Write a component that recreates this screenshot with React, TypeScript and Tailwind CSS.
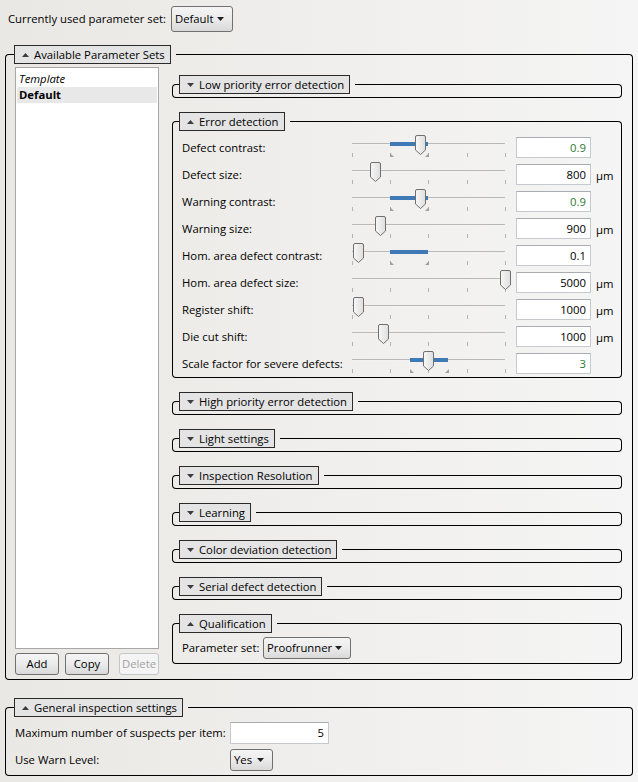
import React from "react";

const TriUp = () => (
  <svg width="7" height="4" viewBox="0 0 7 4" className="shrink-0">
    <polygon points="0,4 3.5,0 7,4" fill="#3c3c3c" />
  </svg>
);
const TriDown = () => (
  <svg width="7" height="4" viewBox="0 0 7 4" className="shrink-0">
    <polygon points="0,0 7,0 3.5,4" fill="#3c3c3c" />
  </svg>
);
const ComboArrow = () => (
  <svg width="7" height="4" viewBox="0 0 7 4" className="shrink-0">
    <polygon points="0,0 7,0 3.5,4" fill="#202020" />
  </svg>
);

function GroupBox({
  title,
  open,
  cornerClass,
  bodyClass,
  children,
}: {
  title: string;
  open: boolean;
  cornerClass: string;
  bodyClass: string;
  children?: React.ReactNode;
}) {
  return (
    <div className="flex flex-col">
      <div className="flex items-start h-[19px]">
        <div className={"h-[10px] mt-[9px] border-l border-t border-black rounded-tl-[4px] shrink-0 " + cornerClass} />
        <div className="h-[19px] flex items-center border border-[#2a2a2a] bg-[#e4e4e4] pl-[7px] pr-[5px] gap-[5px] shrink-0 leading-none">
          {open ? <TriUp /> : <TriDown />}
          <span className="whitespace-nowrap">{title}</span>
        </div>
        <div className="flex-1 h-[10px] mt-[9px] ml-[5px] border-t border-r border-black rounded-tr-[4px]" />
      </div>
      <div className={"border-l border-r border-b border-black rounded-b-[4px] " + bodyClass}>{children}</div>
    </div>
  );
}

function Combo({ label, className }: { label: string; className: string }) {
  return (
    <div
      className={
        "flex items-center justify-between border border-[#707070] rounded-[3px] bg-gradient-to-b from-[#f5f5f5] via-[#ebebeb] to-[#d9d9d9] pl-[3px] pr-[8px] shrink-0 " +
        className
      }
    >
      <span className="whitespace-nowrap">{label}</span>
      <ComboArrow />
    </div>
  );
}

type SliderProps = { thumb: number; sel?: [number, number] };

function Slider({ thumb, sel }: SliderProps) {
  const ticks = [1, 39, 77, 116, 154];
  return (
    <svg width="155" height="27" viewBox="0 0 155 27" className="shrink-0 overflow-visible">
      <defs>
        <linearGradient id="thumbg" x1="0" y1="0" x2="1" y2="0">
          <stop offset="0" stopColor="#f7f7f7" />
          <stop offset="1" stopColor="#dedede" />
        </linearGradient>
      </defs>
      <rect x="1" y="9" width="153" height="1" fill="#b9b9b9" />
      <rect x="1" y="10" width="153" height="1" fill="#f2f2f2" />
      {sel && <rect x={sel[0]} y="8" width={sel[1] - sel[0]} height="4" fill="#3f79b6" />}
      {ticks.map((t) => (
        <rect key={t} x={t} y="19" width="1" height="4" fill="#b3b3b3" />
      ))}
      {sel && (
        <>
          <polygon points={`${sel[0]},19 ${sel[0]},23 ${sel[0] + 4},23`} fill="#a0a0a0" />
          <polygon points={`${sel[1] + 1},19 ${sel[1] + 1},23 ${sel[1] - 3},23`} fill="#a0a0a0" />
        </>
      )}
      <g transform={`translate(${thumb},0)`}>
        <path
          d="M0.5,3 Q0.5,1.5 2,1.5 H9 Q10.5,1.5 10.5,3 V16 L5.5,20.5 L0.5,16 Z"
          fill="url(#thumbg)"
          stroke="#6f6f6f"
          strokeWidth="1"
        />
      </g>
    </svg>
  );
}

type Row = { label: string; value: string; green?: boolean; unit?: boolean; thumb: number; sel?: [number, number] };

const rows: Row[] = [
  { label: "Defect contrast:", value: "0.9", green: true, thumb: 64, sel: [39, 77] },
  { label: "Defect size:", value: "800", unit: true, thumb: 19 },
  { label: "Warning contrast:", value: "0.9", green: true, thumb: 64, sel: [39, 77] },
  { label: "Warning size:", value: "900", unit: true, thumb: 24 },
  { label: "Hom. area defect contrast:", value: "0.1", thumb: 2, sel: [39, 77] },
  { label: "Hom. area defect size:", value: "5000", unit: true, thumb: 149 },
  { label: "Register shift:", value: "1000", unit: true, thumb: 2 },
  { label: "Die cut shift:", value: "1000", unit: true, thumb: 27 },
  { label: "Scale factor for severe defects:", value: "3", green: true, thumb: 72, sel: [59, 97] },
];

function Input({ value, className, green }: { value: string; className: string; green?: boolean }) {
  return (
    <div
      className={
        "flex items-center justify-end bg-white border border-[#c6c9cd] border-t-[#a9acb1] pr-[4px] shrink-0 " +
        (green ? "text-[#2f7a34] " : "text-black ") +
        className
      }
    >
      {value}
    </div>
  );
}

const collapsed = [
  "High priority error detection",
  "Light settings",
  "Inspection Resolution",
  "Learning",
  "Color deviation detection",
  "Serial defect detection",
];

export default function App() {
  return (
    <div className="w-[638px] h-[782px] overflow-hidden bg-gradient-to-r from-[#eae8e4] to-[#f5f5f5] text-black text-[11.3px] font-['Open_Sans',sans-serif] leading-none">
      {/* top row */}
      <div className="flex items-center pl-[8px] pt-[6px]">
        <span className="w-[163px] whitespace-nowrap">Currently used parameter set:</span>
        <Combo label="Default" className="w-[62px] h-[26px]" />
      </div>

      {/* Available Parameter Sets */}
      <div className="mx-[5px] mt-[13px]">
        <GroupBox title="Available Parameter Sets" open cornerClass="w-[9px]" bodyClass="flex pt-[3px] pl-[9px] pr-[10px] pb-[4px]">
          <div className="w-[144px] flex flex-col shrink-0">
            <div className="h-[582px] bg-white border border-[#a7a7a7] p-[1px] pt-[3px]">
              <div className="h-[16px] flex items-center pl-[2px] italic">Template</div>
              <div className="h-[16px] flex items-center pl-[2px] font-bold bg-[#e8e8e8]">Default</div>
            </div>
            <div className="flex mt-[4px] h-[22px]">
              <div className="w-[44px] flex items-center justify-center border border-[#707070] rounded-[3px] bg-gradient-to-b from-[#f5f5f5] via-[#ebebeb] to-[#d9d9d9]">
                Add
              </div>
              <div className="w-[44px] ml-[6px] flex items-center justify-center border border-[#707070] rounded-[3px] bg-gradient-to-b from-[#f5f5f5] via-[#ebebeb] to-[#d9d9d9]">
                Copy
              </div>
              <div className="w-[40px] ml-[10px] flex items-center justify-center border border-[#c4c7c9] rounded-[3px] bg-[#f4f4f4] text-[#a2a2a2]">
                Delete
              </div>
            </div>
          </div>

          <div className="flex-1 ml-[13px] pt-[8px] flex flex-col gap-[14px]">
            <GroupBox title="Low priority error detection" open={false} cornerClass="w-[7px]" bodyClass="h-[4px]" />

            <GroupBox title="Error detection" open cornerClass="w-[7px]" bodyClass="pt-[3px] pl-[9px] pb-0">
              {rows.map((r) => (
                <div key={r.label} className="flex items-center h-[27px]">
                  <span className="w-[169px] whitespace-nowrap">{r.label}</span>
                  <Slider thumb={r.thumb} sel={r.sel} />
                  <Input value={r.value} green={r.green} className="ml-[10px] w-[75px] h-[21px]" />
                  {r.unit && <span className="ml-[5px] mt-[3px]">µm</span>}
                </div>
              ))}
            </GroupBox>

            {collapsed.map((t) => (
              <GroupBox key={t} title={t} open={false} cornerClass="w-[7px]" bodyClass="h-[4px]" />
            ))}

            <GroupBox title="Qualification" open cornerClass="w-[7px]" bodyClass="flex items-center pt-[4px] pb-[4px] pl-[9px]">
              <span className="w-[81px] whitespace-nowrap">Parameter set:</span>
              <Combo label="Proofrunner" className="w-[88px] h-[22px]" />
            </GroupBox>
          </div>
        </GroupBox>
      </div>

      {/* General inspection settings */}
      <div className="mx-[5px] mt-[18px]">
        <GroupBox title="General inspection settings" open cornerClass="w-[9px]" bodyClass="pt-[5px] pb-[4px] pl-[9px]">
          <div className="flex items-center h-[22px]">
            <span className="w-[215px] whitespace-nowrap">Maximum number of suspects per item:</span>
            <Input value="5" className="w-[99px] h-[22px]" />
          </div>
          <div className="flex items-center h-[22px] mt-[5px]">
            <span className="w-[215px] whitespace-nowrap">Use Warn Level:</span>
            <Combo label="Yes" className="w-[43px] h-[22px]" />
          </div>
        </GroupBox>
      </div>
    </div>
  );
}
